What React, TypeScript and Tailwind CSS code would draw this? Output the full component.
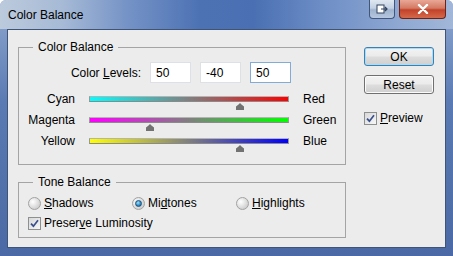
import React from 'react';

const sliders = [
  { left: 'Cyan', right: 'Red', value: 50, grad: 'bg-[linear-gradient(90deg,#00ffff,#ff0000)]' },
  { left: 'Magenta', right: 'Green', value: -40, grad: 'bg-[linear-gradient(90deg,#ff00ff,#00ff00)]' },
  { left: 'Yellow', right: 'Blue', value: 50, grad: 'bg-[linear-gradient(90deg,#ffff00,#0000ff)]' },
];

function CheckBox() {
  return (
    <span className="w-[13px] h-[13px] shrink-0 border border-[#8e8f8f] bg-[linear-gradient(135deg,#d8d8d8,#f7f7f7)] flex items-center justify-center">
      <svg width="9" height="9" viewBox="0 0 9 9">
        <path d="M1 4.6 L3.4 7.2 L8 1.2" stroke="#3a4f8e" strokeWidth="1.7" fill="none" />
      </svg>
    </span>
  );
}

function Radio({ on }: { on?: boolean }) {
  return (
    <span className="w-[13px] h-[13px] shrink-0 rounded-full border border-[#a2a2a2] bg-[radial-gradient(circle_at_35%_35%,#ffffff,#d2d2d2_70%,#c4c4c4)] flex items-center justify-center">
      {on && (
        <span className="w-[7px] h-[7px] rounded-full border border-[#1c4f7a] bg-[radial-gradient(circle_at_40%_35%,#9fe0fb,#2a8ac6_60%,#155a8e)]" />
      )}
    </span>
  );
}

function Thumb() {
  return (
    <svg width="9" height="7" viewBox="0 0 9 7">
      <path d="M4.5 0 Q6 1.5 8.5 3.5 V7 H0.5 V3.5 Q3 1.5 4.5 0 Z" fill="#727272" />
    </svg>
  );
}

function Button({ label, primary }: { label: React.ReactNode; primary?: boolean }) {
  return (
    <button
      className={
        'w-[70px] h-[19px] rounded-[3px] border text-[12px] leading-none text-black bg-[linear-gradient(#f3f3f3,#ebebeb_48%,#dddddd_52%,#cfcfcf)] ' +
        (primary ? 'border-[#3c7fb1] shadow-[inset_0_0_0_1px_#a9dcf6]' : 'border-[#707070] shadow-[inset_0_0_0_1px_#fbfbfb]')
      }
    >
      {label}
    </button>
  );
}

export default function App() {
  return (
    <div
      className="w-[453px] h-[256px] flex flex-col overflow-hidden rounded-t-[6px] bg-[linear-gradient(180deg,#8fa8cf,#5a7ab3_40%,#4b6aa5)] text-[12px] text-black"
      style={{ fontFamily: '"Liberation Sans", Arial, sans-serif' }}
    >
      {/* title bar */}
      <div className="h-[29px] shrink-0 flex justify-between bg-[linear-gradient(90deg,#bccadc_0%,#a6bad6_14%,#7593c6_28%,#4d72b4_44%,#4a70b3_56%,#6f8fc6_72%,#8ea8d2_88%,#a2b7d8_100%)]">
        <span className="pl-[8px] pt-[8px] leading-[14px] text-[12px] text-black">Color Balance</span>
        <div className="flex items-start gap-[4px] pr-[7px]">
          <div className="w-[26px] h-[19px] rounded-b-[4px] border border-t-0 border-[#41567a] bg-[linear-gradient(#dfe7f1,#c3d0e2_45%,#9fb3cf_55%,#b6c7de)] flex items-center justify-center">
            <svg width="12" height="10" viewBox="0 0 12 10">
              <rect x="1" y="1" width="7" height="8" fill="#ffffff" stroke="#33425c" strokeWidth="1" />
              <path d="M5 5 H11 M9 3 L11 5 L9 7" stroke="#33425c" strokeWidth="1.2" fill="none" />
            </svg>
          </div>
          <div className="w-[47px] h-[19px] rounded-b-[4px] border border-t-0 border-[#6a241a] bg-[linear-gradient(#e9a796,#d47a63_45%,#c2412a_55%,#d5694a)] flex items-center justify-center">
            <svg width="12" height="10" viewBox="0 0 12 10">
              <path d="M2 1 L10 9 M10 1 L2 9" stroke="#ffffff" strokeWidth="2.4" strokeLinecap="round" />
            </svg>
          </div>
        </div>
      </div>

      {/* client area */}
      <div className="flex-1 mx-[7px] mb-[8px] border border-[#3e5478] bg-[#ececec] flex pt-[10px] pl-[10px]">
        <div className="w-[328px] flex flex-col">
          <fieldset className="border border-[#a4a4a4] pb-[13px]">
            <legend className="ml-[14px] px-[5px] leading-[14px]">Color Balance</legend>
            <div className="flex items-center h-[21px] mt-[8px]">
              <span className="w-[122px] text-right mr-[9px]">
                Color <span className="underline">L</span>evels:
              </span>
              <div className="flex gap-[9px]">
                {['50', '-40', '50'].map((v, i) => (
                  <input
                    key={i}
                    readOnly
                    value={v}
                    className={
                      'w-[41px] h-[21px] bg-white pl-[5px] text-[12px] outline-none border ' +
                      (i === 2 ? 'border-[#84aad6]' : 'border-[#dde1e6]')
                    }
                  />
                ))}
              </div>
            </div>
            <div className="mt-[5px] flex flex-col">
              {sliders.map((s) => (
                <div key={s.left} className="grid grid-cols-[56px_200px_1fr] gap-x-[14px] items-center h-[21px]">
                  <span className="text-right">{s.left}</span>
                  <div className={'relative h-[6px] border-y border-x border-t-[#b4b4b4] border-b-[#8a8a8a] border-x-[#9a9a9a] ' + s.grad}>
                    <span className="absolute top-[6px] -translate-x-1/2 flex" style={{ left: s.value + 100 }}>
                      <Thumb />
                    </span>
                  </div>
                  <span>{s.right}</span>
                </div>
              ))}
            </div>
          </fieldset>

          <fieldset className="mt-[10px] border border-[#a4a4a4] pb-[6px]">
            <legend className="ml-[14px] px-[5px] leading-[14px]">Tone Balance</legend>
            <div className="flex items-center h-[16px] mt-[6px] pl-[9px]">
              <div className="w-[104px] flex items-center gap-[3px]">
                <Radio />
                <span>
                  <span className="underline">S</span>hadows
                </span>
              </div>
              <div className="w-[104px] flex items-center gap-[3px]">
                <Radio on />
                <span>
                  Mi<span className="underline">d</span>tones
                </span>
              </div>
              <div className="flex items-center gap-[3px]">
                <Radio />
                <span>
                  <span className="underline">H</span>ighlights
                </span>
              </div>
            </div>
            <div className="flex items-center h-[16px] mt-[4px] pl-[9px] gap-[3px]">
              <CheckBox />
              <span>
                Preser<span className="underline">v</span>e Luminosity
              </span>
            </div>
          </fieldset>
        </div>

        <div className="ml-[18px] pt-[7px] flex flex-col w-[70px]">
          <Button label="OK" primary />
          <div className="mt-[9px]">
            <Button label="Reset" />
          </div>
          <div className="mt-[15px] flex items-center gap-[3px]">
            <CheckBox />
            <span>
              <span className="underline">P</span>review
            </span>
          </div>
        </div>
      </div>
    </div>
  );
}
